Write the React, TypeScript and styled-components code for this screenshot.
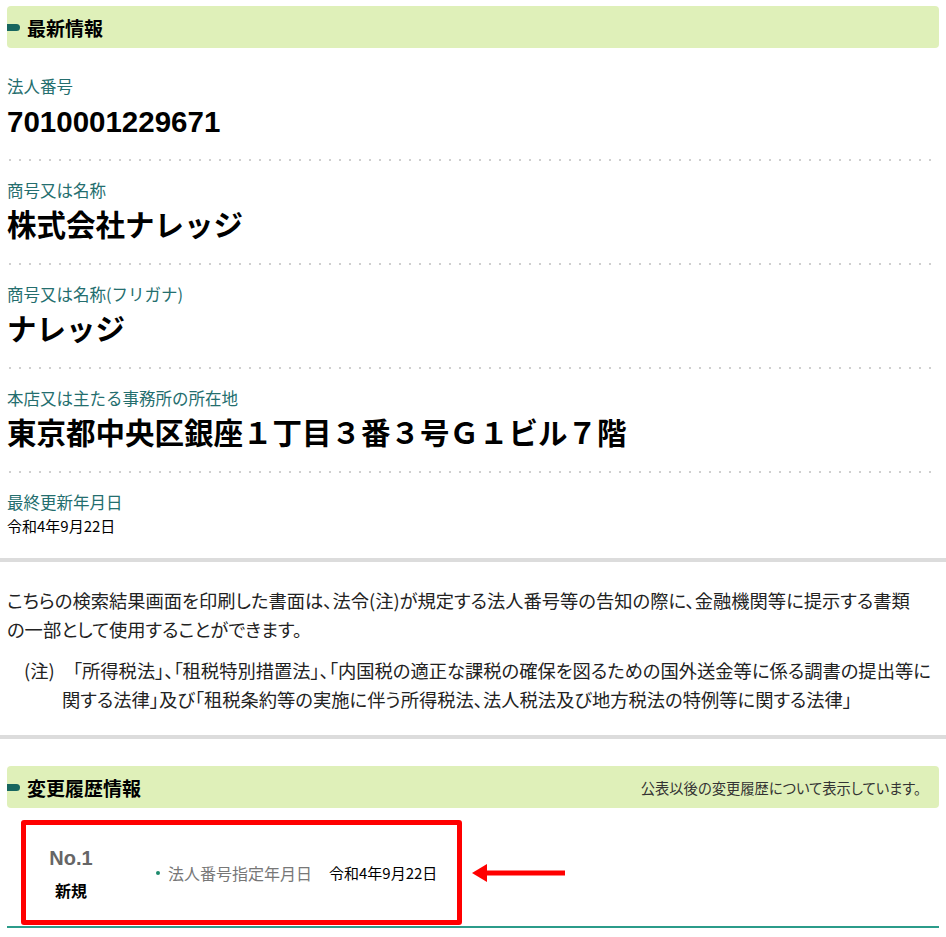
import React from 'react'
import styled, { createGlobalStyle } from 'styled-components'

type FieldData = {
  label: string
  value: string
}

const fields: FieldData[] = [
  { label: '法人番号', value: '7010001229671' },
  { label: '商号又は名称', value: '株式会社ナレッジ' },
  { label: '商号又は名称(フリガナ)', value: 'ナレッジ' },
  { label: '本店又は主たる事務所の所在地', value: '東京都中央区銀座１丁目３番３号Ｇ１ビル７階' },
]

const App = () => {
  return (
    <Page>
      <GlobalStyle />
      <Section>
        <SectionHeader>
          <HeaderTitle>最新情報</HeaderTitle>
        </SectionHeader>
        <FieldList>
          {fields.map((f) => (
            <Field key={f.label} $dotted>
              <FieldLabel>{f.label}</FieldLabel>
              <FieldValue>{f.value}</FieldValue>
            </Field>
          ))}
          <Field>
            <FieldLabel>最終更新年月日</FieldLabel>
            <PlainValue>令和4年9月22日</PlainValue>
          </Field>
        </FieldList>
      </Section>

      <Divider />

      <Notice>
        <NoticeText>
          　こちらの検索結果画面を印刷した書面は、法令(注)が規定する法人番号等の告知の際に、金融機関等に提示する書類<br />
          の一部として使用することができます。
        </NoticeText>
        <NoteText>
          (注)　「所得税法」、「租税特別措置法」、「内国税の適正な課税の確保を図るための国外送金等に係る調書の提出等に<br />
          関する法律」及び「租税条約等の実施に伴う所得税法、法人税法及び地方税法の特例等に関する法律」
        </NoteText>
      </Notice>

      <Divider />

      <Section $top={27}>
        <SectionHeader>
          <HeaderTitle>変更履歴情報</HeaderTitle>
          <HeaderNote>公表以後の変更履歴について表示しています。</HeaderNote>
        </SectionHeader>
        <HistoryList>
          <HistoryRow>
            <Highlight>
              <NoCol>
                <NoLabel>No.1</NoLabel>
                <Kind>新規</Kind>
              </NoCol>
              <Item>
                <ItemLabel>法人番号指定年月日</ItemLabel>
                <ItemValue>令和4年9月22日</ItemValue>
              </Item>
            </Highlight>
            <Arrow width="94" height="20" viewBox="0 0 94 20">
              <polygon points="0,10 15,1 15,19" fill="#f00" />
              <rect x="14" y="7.5" width="79" height="5" fill="#f00" />
            </Arrow>
          </HistoryRow>
        </HistoryList>
      </Section>
    </Page>
  )
}

const GlobalStyle = createGlobalStyle`
  body {
    margin: 0;
    background: #fff;
    color: #000;
    font-family: "Noto Sans CJK JP", sans-serif;
  }
`

const Page = styled.div`
  width: 946px;
`

const Section = styled.section<{ $top?: number }>`
  padding: ${(p) => p.$top ?? 6}px 7px 0;
`

const SectionHeader = styled.div`
  display: flex;
  align-items: center;
  height: 42px;
  padding-right: 18px;
  background: #dff0b9;
  border-radius: 4px;

  &:before {
    content: '';
    display: block;
    width: 13px;
    height: 7px;
    margin-right: 7px;
    background: #17665f;
    border-radius: 0 3.5px 3.5px 0;
  }
`

const HeaderTitle = styled.h2`
  margin: 0;
  font-size: 19px;
  font-weight: bold;
  line-height: 1;
`

const HeaderNote = styled.span`
  margin-left: auto;
  font-size: 14.3px;
  color: #333;
  font-feature-settings: "palt";
`

const FieldList = styled.div`
  margin-top: 9px;
  padding-bottom: 20px;
`

const Field = styled.div<{ $dotted?: boolean }>`
  padding: 17px 0 ${(p) => (p.$dotted ? 19 : 0)}px;
  background: ${(p) =>
    p.$dotted
      ? 'linear-gradient(to right, #cfcfcf 0 2px, transparent 2px 10px) 2px 100% / 10px 2px repeat-x'
      : 'none'};
`

const FieldLabel = styled.div`
  font-size: 16.5px;
  line-height: 24px;
  color: #246e6e;
`

const FieldValue = styled.div`
  margin-top: 4px;
  font-family: "Liberation Sans", "Noto Sans CJK JP", sans-serif;
  font-size: 29.5px;
  font-weight: bold;
  line-height: 40px;
`

const PlainValue = styled.div`
  font-size: 15px;
  line-height: 24px;
`

const Divider = styled.hr`
  margin: 0;
  height: 4px;
  border: none;
  background: #dcdcdc;
`

const Notice = styled.div`
  padding: 24px 7px 21px;
  color: #222;
  font-size: 18.3px;
  line-height: 29px;
  font-feature-settings: "palt";
`

const NoticeText = styled.p`
  margin: 0;
  white-space: nowrap;
`

const NoteText = styled.p`
  margin: 12px 0 0;
  padding-left: 55px;
  text-indent: -38px;
  white-space: nowrap;
`

const HistoryList = styled.div`
  padding: 12px 0 1px 14px;
  border-bottom: 2px solid #2b9c8a;
`

const HistoryRow = styled.div`
  display: flex;
  align-items: center;
`

const Highlight = styled.div`
  display: flex;
  align-items: center;
  width: 441px;
  height: 105px;
  box-sizing: border-box;
  border: 5px solid #f00;
  border-radius: 3px;
`

const NoCol = styled.div`
  display: flex;
  flex-direction: column;
  align-items: center;
  gap: 6px;
  width: 90px;
`

const NoLabel = styled.span`
  font-family: "Liberation Sans", sans-serif;
  font-size: 20px;
  font-weight: bold;
  line-height: 28px;
  color: #666;
`

const Kind = styled.span`
  font-size: 16px;
  font-weight: bold;
  line-height: 24px;
`

const Item = styled.div`
  display: flex;
  align-items: center;
  margin-left: 40px;

  &:before {
    content: '';
    width: 4px;
    height: 4px;
    margin-right: 8px;
    border-radius: 50%;
    background: #1c8a6c;
  }
`

const ItemLabel = styled.span`
  font-size: 16px;
  color: #777;
`

const ItemValue = styled.span`
  margin-left: 17px;
  font-size: 15px;
`

const Arrow = styled.svg`
  display: block;
  margin-left: 10px;
`

export default App
